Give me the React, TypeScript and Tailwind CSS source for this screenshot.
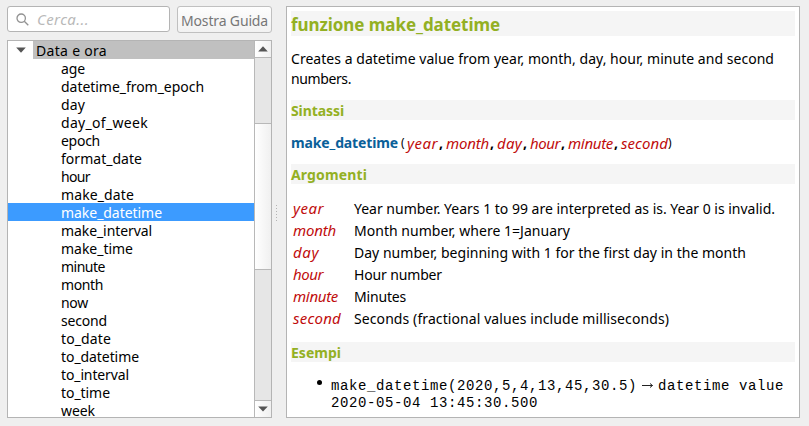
import React from "react";

const functions: [string, string][] = [
  ["age", "w-[24px]"],
  ["datetime_from_epoch", "w-[143px]"],
  ["day", "w-[24px]"],
  ["day_of_week", "w-[87px]"],
  ["epoch", "w-[39px]"],
  ["format_date", "w-[81px]"],
  ["hour", "w-[29px]"],
  ["make_date", "w-[73px]"],
  ["make_datetime", "w-[101px]"],
  ["make_interval", "w-[91px]"],
  ["make_time", "w-[72px]"],
  ["minute", "w-[44px]"],
  ["month", "w-[42px]"],
  ["now", "w-[27px]"],
  ["second", "w-[46px]"],
  ["to_date", "w-[50px]"],
  ["to_datetime", "w-[78px]"],
  ["to_interval", "w-[68px]"],
  ["to_time", "w-[49px]"],
  ["week", "w-[34px]"],
];

const args: [string, string, string, string][] = [
  ["year", "Year number. Years 1 to 99 are interpreted as is. Year 0 is invalid.", "w-[31px]", "w-[421px]"],
  ["month", "Month number, where 1=January", "w-[43px]", "w-[216px]"],
  ["day", "Day number, beginning with 1 for the first day in the month", "w-[26px]", "w-[392px]"],
  ["hour", "Hour number", "w-[30px]", "w-[88px]"],
  ["minute", "Minutes", "w-[45px]", "w-[52px]"],
  ["second", "Seconds (fractional values include milliseconds)", "w-[48px]", "w-[315px]"],
];

/* A single line whose letter spacing is adjusted so that it fills its box. */
function Line({ children, className = "" }: { children: string; className?: string }) {
  const box = React.useRef<HTMLSpanElement>(null);
  const [spacing, setSpacing] = React.useState(0);
  React.useLayoutEffect(() => {
    const el = box.current!;
    const text = el.firstElementChild as HTMLElement;
    const natural = text.getBoundingClientRect().width - spacing * children.length;
    setSpacing((el.getBoundingClientRect().width - natural) / children.length);
  }, [children]);
  return (
    <span ref={box} className={`inline-block shrink-0 whitespace-pre ${className}`}>
      <span style={{ letterSpacing: spacing }}>{children}</span>
    </span>
  );
}

function Heading({ children, className = "" }: { children: string; className?: string }) {
  return (
    <h2 className="h-5 bg-[#f5f5f5] text-[14px] leading-[22px] font-bold text-[#93b023]">
      <Line className={className}>{children}</Line>
    </h2>
  );
}

function Arrow({ up = false }: { up?: boolean }) {
  return (
    <div className={`flex h-[17px] items-center justify-center bg-gradient-to-r from-white to-[#f0f0f0] ${up ? "border-b" : "border-t"} border-[#b8b8b8]`}>
      <svg width="10" height="6" viewBox="0 0 10 6" fill="#555">
        <path d={up ? "M5 0.3 9.8 5.4H0.2Z" : "M5 5.4 0.2 0.4H9.8Z"} />
      </svg>
    </div>
  );
}

const params: [string, string][] = [
  ["year", "w-[31px]"],
  ["month", "w-[43px]"],
  ["day", "w-[25px]"],
  ["hour", "w-[30px]"],
  ["minute", "w-[45px]"],
  ["second", "w-[47px]"],
];

export default function App() {
  return (
    <div className="flex h-[426px] w-[809px] overflow-hidden bg-[#efefef] pt-[6px] pl-[7px] font-['Noto_Sans',sans-serif] text-[14px] text-black">
      <aside className="flex w-[265px] flex-col">
        <div className="flex h-[34px] items-start justify-between">
          <div className="flex h-[26px] w-[163px] items-center rounded-[3px] border border-[#b4b4b4] bg-white pl-[8px]">
            <svg width="13" height="13" viewBox="0 0 13 13" fill="none" stroke="#929292" strokeWidth="1.3">
              <circle cx="5.2" cy="5.2" r="4.2" />
              <path d="m8.3 8.3 4 4" />
            </svg>
            <Line className="ml-[8px] w-[52px] text-[15px] text-[#b9b9b9] italic">Cerca...</Line>
          </div>
          <button className="flex h-[27px] w-[95px] items-start justify-center rounded-[3px] border border-[#c0c0c0] bg-gradient-to-b from-[#fdfdfd] to-[#f2f2f2] leading-[27px] text-[#777]">
            <Line className="w-[87px]">Mostra Guida</Line>
          </button>
        </div>
        <div className="flex h-[378px] border border-[#b4b4b4] bg-white">
          <div className="w-[246px] overflow-hidden">
            <div className="flex h-[18px]">
              <div className="flex w-[25px] items-center pl-[8px]">
                <svg width="10" height="6" viewBox="0 0 10 6" fill="#555">
                  <path d="M0.2 0.4H9.8L5 5.8Z" />
                </svg>
              </div>
              <div className="flex flex-1 items-start bg-[#c0c0c0] pl-[3px] leading-[20px]">
                <Line className="w-[71px]">Data e ora</Line>
              </div>
            </div>
            {functions.map(([name, width]) => (
              <div
                key={name}
                className={`flex h-[18px] items-start pl-[53px] leading-[20px] ${name === "make_datetime" ? "bg-[#3c9bff] text-white" : ""}`}
              >
                <Line className={width}>{name}</Line>
              </div>
            ))}
          </div>
          <div className="flex w-[17px] flex-col border-l border-[#b8b8b8] bg-[#e6e6e6]">
            <Arrow up />
            <div className="mt-[65px] h-[147px] border-y border-[#b8b8b8] bg-gradient-to-r from-white to-[#f0f0f0]" />
            <div className="flex-1" />
            <Arrow />
          </div>
        </div>
      </aside>
      <div className="flex w-[14px] flex-col items-center gap-[2px] pt-[199px] pr-[6px]">
        {[0, 1, 2, 3, 4, 5].map((i) => (
          <span key={i} className="h-px w-px bg-[#b4b4b4]" />
        ))}
      </div>
      <main className="h-[412px] w-[514px] overflow-hidden border border-[#b4b4b4] bg-white px-1 pt-1">
        <h1 className="h-[25px] bg-[#f5f5f5] text-[17px] leading-[28px] font-bold text-[#93b023]">
          <Line className="w-[209px]">funzione make_datetime</Line>
        </h1>
        <div className="mt-[13px] h-[40px] leading-5">
          <Line className="block w-[483px]">Creates a datetime value from year, month, day, hour, minute and second</Line>
          <Line className="block w-[60px]">numbers.</Line>
        </div>
        <div className="mt-[11px]">
          <Heading className="w-[53px]">Sintassi</Heading>
        </div>
        <div className="flex h-[44px] items-start pt-[13px] leading-5">
          <Line className="w-[107px] font-bold text-[#0a6099]">make_datetime</Line>
          <span className="w-[9px] pl-[3px] text-[12px]">(</span>
          {params.map(([name, width], i) => (
            <React.Fragment key={name}>
              <Line className={`${width} text-[15px] text-[#bf0c0c] italic`}>{name}</Line>
              {i < params.length - 1 && <span className="w-[8px] pl-[1px] font-bold">,</span>}
            </React.Fragment>
          ))}
          <span className="text-[12px]">)</span>
        </div>
        <Heading className="w-[76px]">Argomenti</Heading>
        <div className="mt-[14px] pl-[2px]">
          {args.map(([name, text, nameWidth, textWidth]) => (
            <div key={name} className="flex h-[22px] leading-[22px]">
              <div className="w-[61px] text-[15px] leading-[20px] text-[#bf0c0c] italic">
                <Line className={nameWidth}>{name}</Line>
              </div>
              <Line className={textWidth}>{text}</Line>
            </div>
          ))}
        </div>
        <div className="mt-[12px]">
          <Heading className="w-[50px]">Esempi</Heading>
        </div>
        <div className="mt-[16px] flex pl-[26px] font-['Liberation_Mono',monospace] text-[14px] leading-[17px]">
          <span className="mt-[2px] mr-[9px] h-[5px] w-[5px] rounded-full bg-black" />
          <div>
            <div className="flex">
              <Line className="w-[306px]">make_datetime(2020,5,4,13,45,30.5)</Line>
              <svg className="mr-[4px] ml-[5px] mt-[4px]" width="12" height="8" viewBox="0 0 12 8" fill="none" stroke="#222">
                <path d="M0 3.5h10.5M8 1.5l2.5 2L8 5.5" />
              </svg>
              <Line className="w-[126px]">datetime value</Line>
            </div>
            <Line className="w-[207px]">2020-05-04 13:45:30.500</Line>
          </div>
        </div>
      </main>
    </div>
  );
}
